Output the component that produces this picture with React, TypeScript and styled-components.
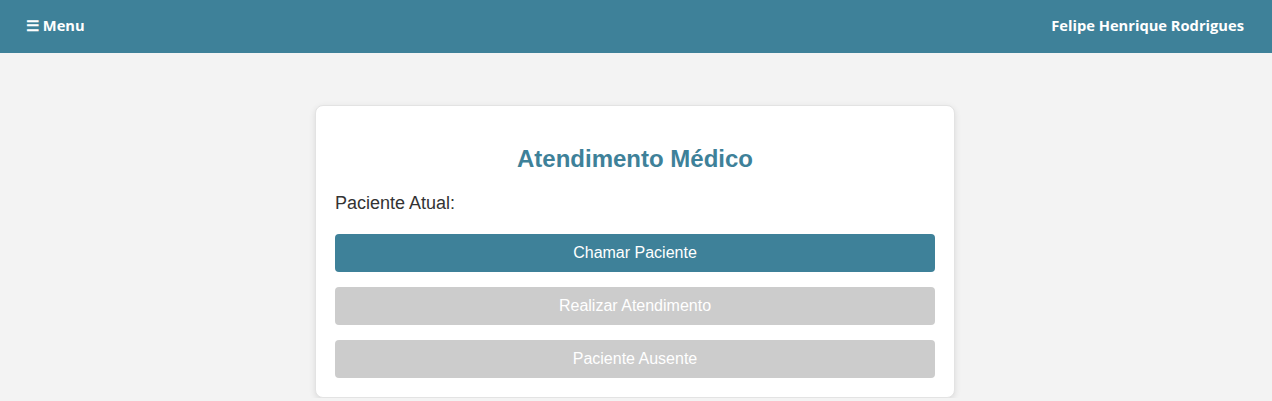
import React from "react";
import styled, { createGlobalStyle } from "styled-components";

const Global = createGlobalStyle`
  html, body { margin: 0; padding: 0; }
  body {
    background: #f3f3f3;
    font-family: "Liberation Sans", Arial, sans-serif;
  }
`;

const Header = styled.header`
  height: 53px;
  background: #3e8199;
  color: #fff;
  display: flex;
  align-items: center;
  justify-content: space-between;
  padding: 0 28px 4px 26px;
  box-sizing: border-box;
  font-family: "Open Sans", sans-serif;
  font-weight: 700;
  font-size: 14.7px;
`;

const MenuButton = styled.button`
  background: none;
  border: none;
  color: #fff;
  font: inherit;
  padding: 0;
  cursor: pointer;
`;

const UserName = styled.span``;

const Main = styled.main`
  display: flex;
  justify-content: center;
  padding: 52px 2px 0 0;
`;

const Card = styled.section`
  width: 640px;
  box-sizing: border-box;
  background: #fff;
  border: 1px solid #e3e3e3;
  border-radius: 8px;
  box-shadow: 0 2px 6px rgba(0, 0, 0, 0.1);
  padding: 19px;
  display: flex;
  flex-direction: column;
`;

const Title = styled.h2`
  margin: 20px 0 20px;
  text-align: center;
  color: #3e8199;
  font-size: 24px;
  line-height: 28px;
  font-weight: 700;
`;

const Label = styled.p`
  margin: 0 0 21px;
  font-size: 18px;
  line-height: 20px;
  color: #333;
`;

const ActionButton = styled.button<{ $active?: boolean }>`
  height: 38px;
  border: none;
  border-radius: 4px;
  background: ${(p) => (p.$active ? "#3e8199" : "#cccccc")};
  color: #fff;
  font-family: "Liberation Sans", Arial, sans-serif;
  font-size: 16px;
  margin-bottom: 15px;
  cursor: ${(p) => (p.$active ? "pointer" : "not-allowed")};
  &:last-child { margin-bottom: 0; }
`;

export default function App() {
  return (
    <>
      <Global />
      <Header>
        <MenuButton>☰ Menu</MenuButton>
        <UserName>Felipe Henrique Rodrigues</UserName>
      </Header>
      <Main>
        <Card>
          <Title>Atendimento Médico</Title>
          <Label>Paciente Atual:</Label>
          <ActionButton $active>Chamar Paciente</ActionButton>
          <ActionButton disabled>Realizar Atendimento</ActionButton>
          <ActionButton disabled>Paciente Ausente</ActionButton>
        </Card>
      </Main>
    </>
  );
}
